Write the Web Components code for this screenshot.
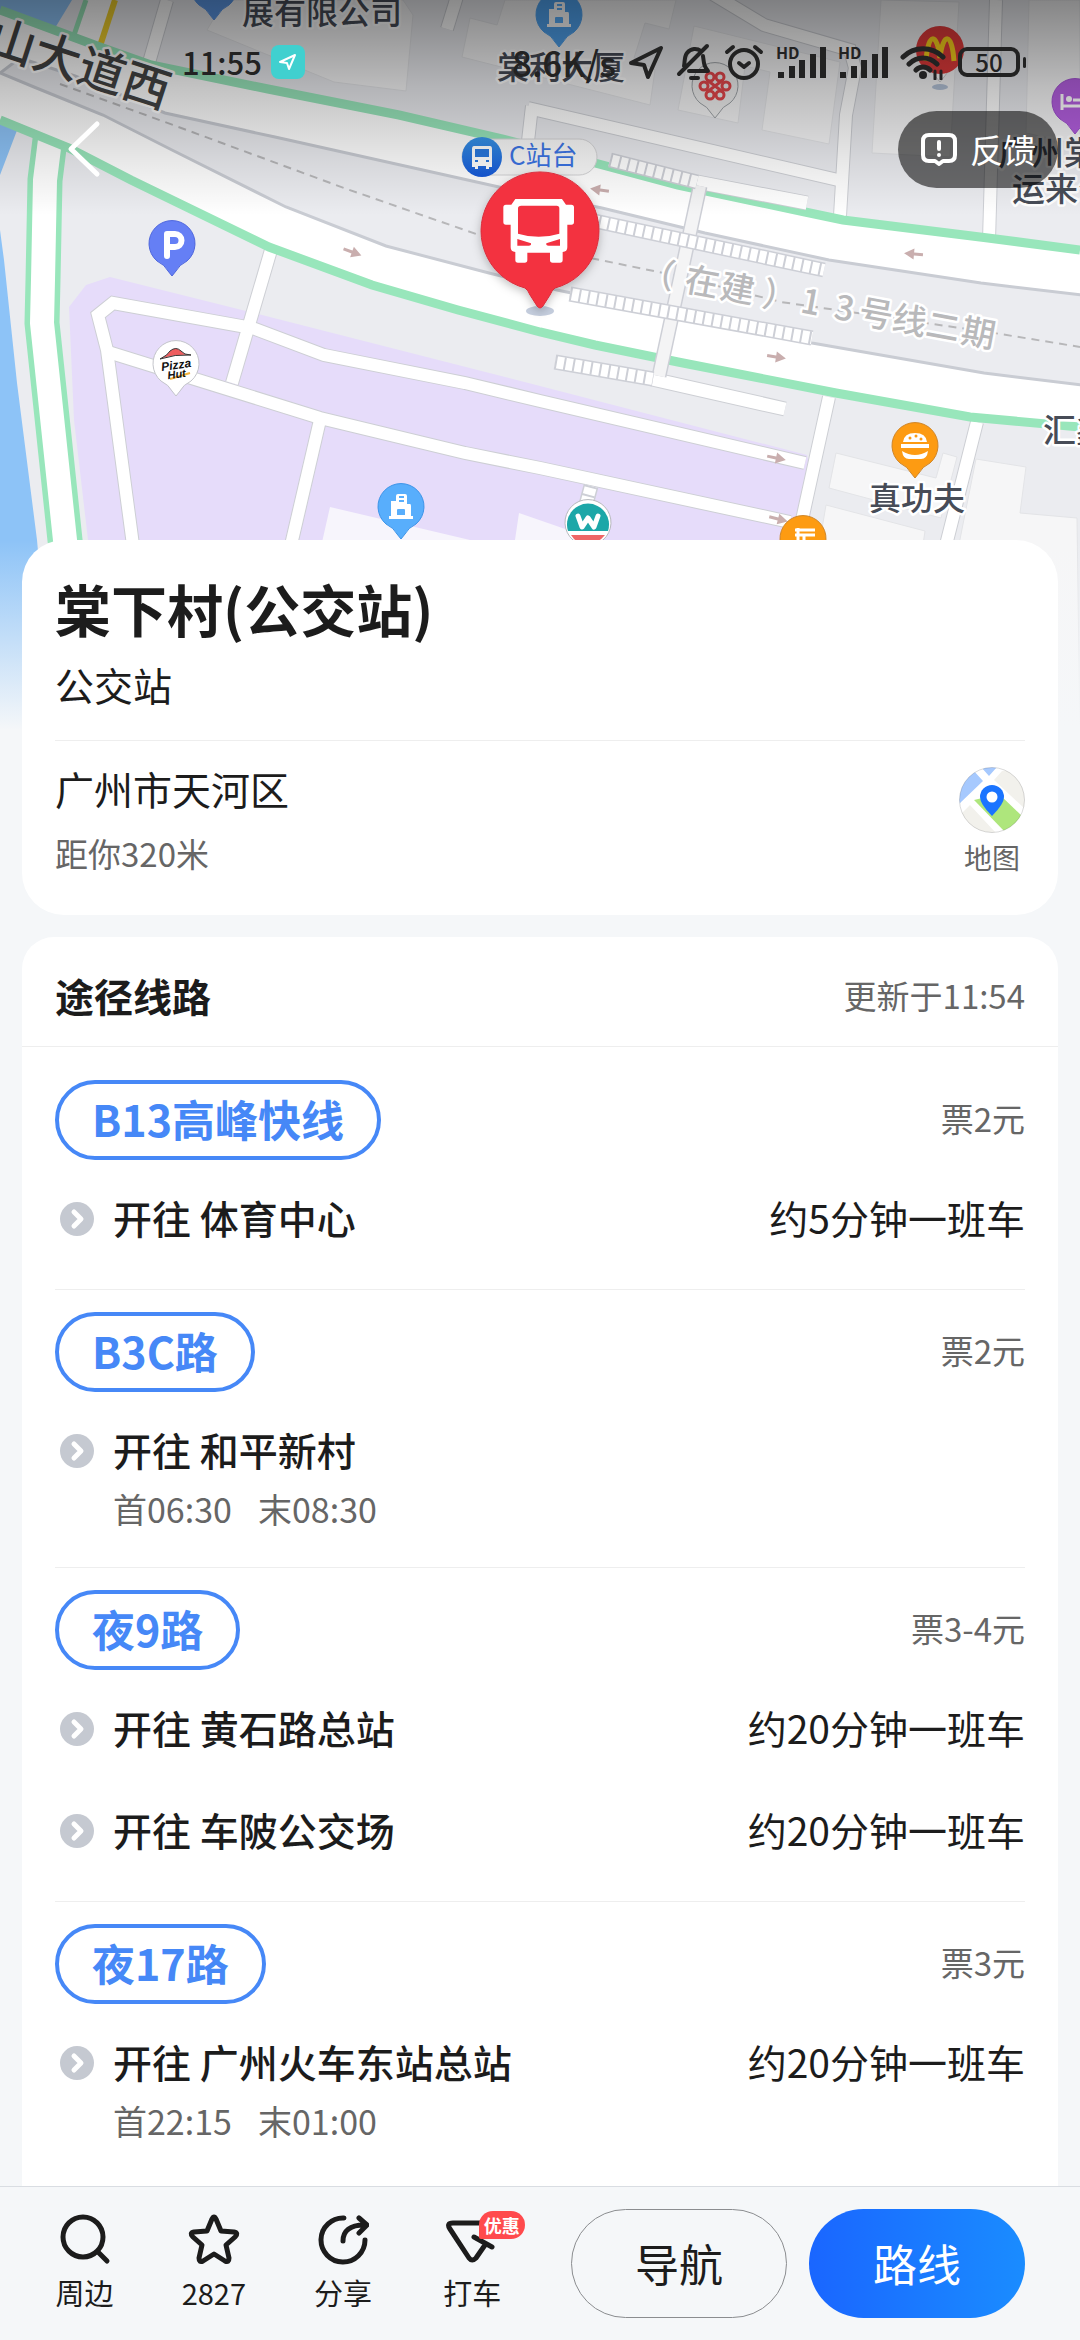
<!DOCTYPE html>
<html lang="zh-CN">
<head>
<meta charset="utf-8">
<meta name="viewport" content="width=device-width, initial-scale=1">
<title>棠下村(公交站)</title>
<style>
  :root {
    --page-bg: #f5f7f9;
    --text-primary: #1c1c1c;
    --text-muted: #666;
    --line: #eee;
    --accent: #4688f7;
  }
  body {
    margin: 0;
    background: var(--page-bg);
    color: var(--text-primary);
    font-family: "Noto Sans CJK SC", "Noto Sans", sans-serif;
  }
</style>
</head>
<body>
<station-page>
  <status-bar slot="overlay"></status-bar>
  <map-header slot="overlay"></map-header>
  <transit-map slot="map"></transit-map>
  <place-card heading="棠下村(公交站)" kind="公交站">
    <span slot="address">广州市天河区</span>
    <span slot="distance">距你320米</span>
  </place-card>
  <route-card heading="途径线路" updated="更新于11:54">
    <route-item name="B13高峰快线" price="票2元">
      <route-direction to="体育中心" every="约5分钟一班车"></route-direction>
    </route-item>
    <route-item name="B3C路" price="票2元">
      <route-direction to="和平新村" first="06:30" last="08:30"></route-direction>
    </route-item>
    <route-item name="夜9路" price="票3-4元">
      <route-direction to="黄石路总站" every="约20分钟一班车"></route-direction>
      <route-direction to="车陂公交场" every="约20分钟一班车"></route-direction>
    </route-item>
    <route-item name="夜17路" price="票3元">
      <route-direction to="广州火车东站总站" every="约20分钟一班车" first="22:15" last="01:00"></route-direction>
    </route-item>
  </route-card>
  <action-bar slot="footer">
    <action-tab icon="search">周边</action-tab>
    <action-tab icon="star">2827</action-tab>
    <action-tab icon="share">分享</action-tab>
    <action-tab icon="taxi" badge="优惠">打车</action-tab>
  </action-bar>
</station-page>

<script>
class BaseElement extends HTMLElement {
  constructor() {
    super();
    this.attachShadow({ mode: 'open' });
  }

  connectedCallback() {
    this.shadowRoot.innerHTML = `<style>${this.styles()}</style>${this.render()}`;
  }

  attr(name) {
    return this.getAttribute(name) || '';
  }
}

// page shell: scrolling content above a fixed action bar
class StationPage extends BaseElement {
  styles() {
    return `
      :host { display: flex; flex-direction: column; height: 100vh; }
      main { flex: 1; min-height: 0; position: relative; overflow-y: auto; scrollbar-width: none; }
      .overlay { position: absolute; top: 0; left: 0; right: 0; z-index: 2; }
      .cards { position: relative; display: flex; flex-direction: column; gap: 22px; padding: 0 22px; }
    `;
  }

  render() {
    return `
      <main>
        <div class="overlay"><slot name="overlay"></slot></div>
        <slot name="map"></slot>
        <div class="cards"><slot></slot></div>
      </main>
      <slot name="footer"></slot>
    `;
  }
}

class StatusBar extends BaseElement {
  styles() {
    return `
      :host { display: flex; align-items: center; height: 42px; padding: 41px 54px 0 182px; color: #222; font-size: 31px; font-weight: 500; line-height: 42px; }
      .badge { margin-left: 9px; }
      .right { display: flex; align-items: center; gap: 12px; margin-left: auto; }
      .speed { font-size: 35px; }
      svg { display: block; fill: none; stroke: currentColor; stroke-width: 5; stroke-linecap: round; stroke-linejoin: round; }
      .signal { position: relative; display: block; width: 50px; height: 36px; }
      .signal b { position: absolute; top: 0; left: 0; font-size: 16px; line-height: 16px; }
      .signal svg { stroke-linecap: butt; }
      .battery { display: flex; align-items: center; gap: 3px; }
      .battery span { box-sizing: border-box; width: 62px; height: 30px; border: 4px solid; border-radius: 9px; text-align: center; font-size: 24px; line-height: 21px; }
      .battery i { width: 3px; height: 11px; border-radius: 2px; background: currentColor; }
    `;
  }

  signal() {
    return `
      <span class="signal"><b>HD</b>
        <svg width="50" height="36" style="stroke-width:6"><path d="M5 34v-6M16 34V22M26 34V16M37 34V10M47 34V3"/></svg>
      </span>`;
  }

  render() {
    return `
      <span>11:55</span>
      <svg class="badge" width="34" height="34"><rect width="34" height="34" rx="8" fill="#40d0cf" stroke="none"/><path d="M9 17 24 10 18 24 16 18Z" stroke="#fff" stroke-width="2"/></svg>
      <div class="right">
        <span class="speed">8.6K/s</span>
        <svg width="36" height="36" style="stroke-width:4"><path d="M3 19 33 4 20 33 16 21Z"/></svg>
        <svg width="36" height="38" style="stroke-width:4"><path d="M3 31 31 3M8 23c1-4 0-9 3-13 4-5 10-5 14-2M27 13c1 8 1 10 5 15H13M15 35h7"/></svg>
        <svg width="40" height="38" style="stroke-width:4"><circle cx="20" cy="21" r="14"/><path d="M3 9 9 4M37 9l-6-5M15 20l5 4 5-4"/></svg>
        ${this.signal()}
        ${this.signal()}
        <svg width="46" height="36"><path d="M3 13c11-11 29-11 40 0M9 20c8-8 20-8 28 0M16 26c4-4 10-4 14 0"/><path d="M23 31v0" stroke-width="8"/><path d="M35 27v8M41 27v8" stroke-width="3"/></svg>
        <div class="battery"><span>50</span><i></i></div>
      </div>
    `;
  }
}

class MapHeader extends BaseElement {
  styles() {
    return `
      :host { display: flex; align-items: center; justify-content: space-between; height: 132px; padding: 0 22px 0 54px; }
      button { display: flex; align-items: center; border: 0; padding: 0; background: none; color: #fff; font: inherit; }
      svg { display: block; fill: none; stroke: #fff; stroke-linecap: round; stroke-linejoin: round; }
      .back { width: 60px; height: 76px; justify-content: center; }
      .feedback { height: 77px; padding: 0 22px; gap: 12px; border-radius: 39px; background: rgba(0, 0, 0, .55); font-size: 33px; line-height: 48px; }
    `;
  }

  render() {
    return `
      <button class="back" aria-label="返回"><svg width="34" height="60" stroke-width="5"><path d="M30 5 4 30l26 25"/></svg></button>
      <button class="feedback">
        <svg width="38" height="34" stroke-width="4"><path d="M9 3h20q6 0 6 6v14q0 6-6 6h-6l-4 3-4-3H9q-6 0-6-6V9q0-6 6-6Z"/><path d="M19 10v7M19 23v0"/></svg>
        反馈
      </button>
    `;
  }
}

// tail + disc shared by every small map marker
const pin = (x, y, fill, glyph = '', edge = fill) => `
  <g transform="translate(${x} ${y})">
    <path d="M-15 17A23 23 0 1 1 15 17Q7 21 4 27L0 32-4 27Q-7 21-15 17Z" fill="${fill}" stroke="${edge}" stroke-width="1"/>
    ${glyph}
  </g>`;

const road = (d, w = 12) => `<path d="${d}" stroke="#cdcfd4" stroke-width="${w + 2}"/>`;
const roadFill = (d, w = 12) => `<path d="${d}" stroke="#fff" stroke-width="${w}"/>`;
const ladder = (d) => `
  <path d="${d}" stroke="#cdcfd6" stroke-width="15"/>
  <path d="${d}" stroke="#fff" stroke-width="12"/>
  <path d="${d}" stroke="#cdcfd6" stroke-width="13" stroke-dasharray="2 7"/>`;
const arrow = (x, y, deg) => `<path transform="translate(${x} ${y}) rotate(${deg})" d="M-9-1.5H0V-5.500L10 0 0 5.500V1.500H-9Z" fill="#c9aeae"/>`;

class TransitMap extends BaseElement {
  styles() {
    return `
      :host { display: block; position: relative; height: 540px; }
      svg { position: absolute; top: 0; left: 0; width: 100%; height: 740px; }
      text { font-weight: 500; fill: #474c57; stroke: #fff; stroke-width: 5px; paint-order: stroke; stroke-linejoin: round; }
    `;
  }

  render() {
    const lanes = [
      'M167 0 148 66', 'M459-10 447 29', 'M532 106 527 150',
      'M706-10 764 25 850 50 855 68 846 115 840 216',
      'M528 108 838 180', 'M996 0 989 240'
    ];
    const blockRoads = [
      'M133 545 107 350 98 315 113 303 241 326 255 329 324 355 465 383 540 401 805 463',
      'M108 352 320 418 465 453 540 468 790 522',
      'M271 250 232 383', 'M320 420 291 545',
      'M829 397 802 520 792 560', 'M977 422 946 545 900 740'
    ];
    const building = `
      <path d="M-12 12V9H-10V-6H-5V-11Q-5-13-3-13H4Q6-13 6-11V-3H9Q10-3 10-1V9H12V12Z" fill="#fff"/>
      <path d="M-2-10H3M-2-6H3" stroke="#58aefc" stroke-width="2"/><path d="M-4 8V3Q-4 2-3 2H3Q4 2 4 3V8Z" fill="#58aefc"/>`;
    return `
      <svg viewBox="0 0 1080 740" preserveAspectRatio="xMidYMin slice" fill="none">
        <defs>
          <linearGradient id="shade" x1="0" y1="0" x2="0" y2="1">
            <stop offset="0" stop-color="#000" stop-opacity=".46"/>
            <stop offset=".4" stop-color="#000" stop-opacity=".24"/>
            <stop offset=".75" stop-color="#000" stop-opacity=".09"/>
            <stop offset="1" stop-color="#000" stop-opacity="0"/>
          </linearGradient>
          <linearGradient id="fade" x1="0" y1="0" x2="0" y2="1">
            <stop offset="0" stop-color="#f5f7f9" stop-opacity="0"/>
            <stop offset="1" stop-color="#f5f7f9"/>
          </linearGradient>
          <linearGradient id="metro" x1="0" y1="0" x2="0" y2="1"><stop stop-color="#3794e8"/><stop offset="1" stop-color="#1658d8"/></linearGradient>
          <filter id="shadow" x="-30%" y="-30%" width="160%" height="160%"><feDropShadow dx="0" dy="3" stdDeviation="5" flood-opacity=".25"/></filter>
        </defs>

        <rect width="1080" height="740" fill="#ebecf0"/>
        <path d="M0 0H72L55 28 35 85 16 133 0 175ZM0 230 4 260 17 383 37 540 55 740H0Z" fill="#8dc3f7"/>

        <!-- buildings -->
        <g fill="#f6f6f7" stroke="#e3e4e7">
          <path d="M225 0 207 30 334 82 406 91 413 15 403 0Z"/>
          <path d="M470 18 497 25 505 0H676L669 29 645 23 634 58 655 70 650 105 462 57Z"/>
          <path d="M694 26 840 62 829 144 762 130 770 72 745 66 738 123 678 110Z"/>
          <path d="M881 0 959 2 950 157 872 153Z"/>
          <path d="M1029 0H1080V145L1026 133Z"/>
          <path d="M836 453 936 478 943 453 957 457 941 518 829 488Z"/>
          <path d="M826 505 925 531 915 600H810Z"/>
          <path d="M976 459 1026 467 1020 513 1077 518 1080 740H920Z"/>
        </g>

        <path d="M110 277 86 285 69 307 74 420 88 540 100 640H790L815 487 807 455 540 386 262 315Z" fill="#e6dcfa"/>
        <path d="M330 507 470 540 500 560H318ZM519 513 620 548 600 560H512Z" fill="#f7f5fc"/>

        <!-- side roads -->
        ${lanes.map(d => road(d)).join('')}${lanes.map(d => roadFill(d)).join('')}
        ${blockRoads.map(d => road(d)).join('')}${blockRoads.map(d => roadFill(d)).join('')}
        <path d="M86 0 74 40 99 50 115 0Z" fill="#fff"/>
        <path d="M86 0 73 38" stroke="#98e6b8" stroke-width="5"/>
        <path d="M115 0 100 46" stroke="#f0cf2c" stroke-width="6"/>
        <path d="M50 140 45 180 43 280 42 323 65 540 88 740" stroke="#98e6bb" stroke-width="35"/>
        <path d="M50 140 45 180 43 280 42 323 65 540 88 740" stroke="#fff" stroke-width="24"/>

        <!-- avenue -->
        <path d="M0 10 100 47 151 65 268 89 399 115 503 139 595 163 678 185 805 212 843 220 988 238 1080 250V427L970 417 836 393 678 362 595 345 540 332 458 310 372 285 269 247 131 180 69 148 0 120Z" fill="#fff"/>
        <path d="M0 73 34 87 103 115 172 150 286 207 386 246 489 273 557 290 812 343 984 373 1090 386V296L981 283 829 260 705 233 602 208 499 187 275 137 165 113 75 76 20 58Z" fill="#ebecf0" stroke="#c9ccd3" stroke-width="3"/>
        <path d="M0 10 100 47 151 65 268 89 399 115 503 139 595 163 678 185 805 212 843 220 988 238 1080 250M0 120 69 148 131 180 269 247 372 285 458 310 540 332 595 345 678 362 836 393 970 417 1080 427" stroke="#98e6bb" stroke-width="9"/>
        <path d="M60 84 165 122 344 188 479 235 600 260 678 276 781 302 988 332 1080 347" stroke="#b7b7b9" stroke-width="2" stroke-dasharray="8 6"/>

        <!-- bus rapid transit platforms -->
        ${road('M697 182 807 203', 13)}${roadFill('M697 182 807 203', 13)}
        ${road('M652 379 785 409', 13)}${roadFill('M652 379 785 409', 13)}
        <path d="M700 186 659 376" stroke="#cdcfd6" stroke-width="15"/>
        <path d="M700 186 659 376" stroke="#f4f4f5" stroke-width="12"/>
        ${ladder('M610 160 697 182')}
        ${ladder('M590 220 824 270')}
        ${ladder('M570 294 812 338')}
        ${ladder('M555 362 653 379')}
        ${ladder('M591 486 584 512')}
        ${arrow(352, 252, 20)}${arrow(600, 190, 188)}${arrow(914, 254, 185)}
        ${arrow(776, 357, 9)}${arrow(776, 458, 12)}${arrow(778, 519, 14)}

        <!-- place names -->
        <text x="242" y="24" font-size="32">展有限公司</text>
        <text x="497" y="79" font-size="32">棠利大厦</text>
        <text x="998" y="165" font-size="33">广州棠</text>
        <text x="1012" y="201" font-size="33">运来公</text>
        <text x="869" y="510" font-size="32">真功夫</text>
        <text x="1043" y="442" font-size="33">汇鑫</text>
        <text transform="translate(-15 51) rotate(18)" font-size="47" style="fill:#444">山大道西</text>
        <text transform="translate(641 283) rotate(10.500)" x="-2 43 79 122 161 195 220 254 288 324" font-size="34" style="fill:#b9b9bb">（在建）13号线二期</text>

        <!-- markers -->
        ${pin(214, -12, '#5b97e6')}
        ${pin(559, 15, '#4fa3f0', building)}
        ${pin(401, 507, '#58aefc', building, '#3d94e8')}
        ${pin(172, 244, '#657ff5', '<path d="M-5 12V-10H3a6 6 0 0 1 0 13H-5" stroke="#fff" stroke-width="6" stroke-linecap="round" stroke-linejoin="round"/>', '#4f67dd')}
        ${pin(715, 86, '#f1f1f1', '<g stroke="#e5474b" stroke-width="3"><circle cx="-5" cy="-9" r="4"/><circle cx="5" cy="-9" r="4"/><circle cx="-11" cy="0" r="4"/><circle cx="11" cy="0" r="4"/><circle cx="-5" cy="9" r="4"/><circle cx="5" cy="9" r="4"/><path d="M-8-6 8 6M8-6-8 6"/></g>', '#9fa4a8')}
        <ellipse cx="940" cy="87" rx="8" ry="3" fill="#b4c3d8"/>
        ${pin(940, 50, '#fff', '<circle r="24" fill="#e23b3b"/><path d="M-14 11C-12-18-3-18 0 8 3-18 12-18 14 11" stroke="#fbd21c" stroke-width="5"/>', '#ccc')}
        ${pin(1075, 102, '#b45fe0', '<path d="M-13-8V8M-13 4H13V-2H-2" stroke="#fff" stroke-width="3"/><circle cx="-6" cy="-3" r="3" fill="#fff"/>', '#a04fd0')}
        ${pin(915, 446, '#fd9b12', '<path d="M-12-4Q-11-13 0-13T12-4ZM-14-2H14V2H-14ZM-13 5Q0 13 13 5 12 13 6 13H-6Q-12 13-13 5Z" fill="#fff"/><path d="M-5-8v0M1-10v0M6-7v0" stroke="#fd9b12" stroke-width="3" stroke-linecap="round"/>', '#cf8528')}
        ${pin(803, 539, '#fd9b12', '<path d="M-8-9H12M-8-4H12M-5-11V4M1-4V4" stroke="#fff" stroke-width="3"/>', '#cf8528')}
        ${pin(588, 523, '#fff', '<path d="M-20 8A21 21 0 1 1 20 8Z" fill="#1ca7a8"/><path d="M-17 12H17Q11 20 0 21T-17 12Z" fill="#ee6666"/><path d="M-10-7-6 4 0-5 6 4 10-7" stroke="#fff" stroke-width="5" stroke-linecap="round" stroke-linejoin="round"/>', '#b7b9bd')}
        ${pin(176, 364, '#fff', '<path d="M-16-5Q-8-9-6-13 0-18 5-13 8-9 15-9-1-10-16-5Z" fill="#ee5d5f" stroke="#333" stroke-width="1"/><path d="M-6 15 14 9" stroke="#f5b23c" stroke-width="2"/><g font-family="Liberation Sans" font-weight="700" font-style="italic" transform="rotate(-8)"><text x="-15" y="5" font-size="12" style="fill:#111;stroke:none;font-weight:700">Pizza</text><text x="-10" y="14" font-size="11" style="fill:#111;stroke:none;font-weight:700">Hut</text></g>', '#c4c5cb')}

        <rect x="462" y="139" width="135" height="36" rx="18" fill="#f8f8f8" stroke="#d4d4d6"/>
        <circle cx="482" cy="157" r="20" fill="url(#metro)"/>
        <path d="M474 146H490Q492 146 492 149V167H489V169H486V166H478V169H475V167H472V149Q472 146 474 146Z" fill="#fff"/>
        <path d="M475 149H489V157H475ZM475 160h3v2h-3ZM486 160h3v2h-3Z" fill="#2a78de"/>
        <text x="509" y="165" font-size="26" style="fill:#3c74e4;stroke:none;font-weight:400">C站台</text>

        <rect width="1080" height="215" fill="url(#shade)"/>
        <rect y="540" width="1080" height="190" fill="url(#fade)"/>
        <rect y="729" width="1080" height="11" fill="#f5f7f9"/>

        <!-- selected stop -->
        <ellipse cx="540" cy="311" rx="14" ry="5" fill="#c4cddd"/>
        <path filter="url(#shadow)" d="M525 288A59 59 0 1 1 555 288Q552 290 550 295L543 306Q540 310 537 306L530 295Q528 290 525 288Z" fill="#f33141" stroke="#d92e3c" stroke-width="1"/>
        <g transform="translate(470 160) scale(.3333)">
          <path d="M136 117H276L288 134H304Q312 134 312 142V186Q312 194 304 194H292V262Q292 276 278 276V300Q278 308 270 308H248Q240 308 240 300V278H172V300Q172 308 164 308H144Q136 308 136 300V276Q122 276 122 262V194H108Q100 194 100 186V142Q100 134 108 134H124Z" fill="#fff"/>
          <path d="M154 137H260Q268 137 268 145V221Q206 240 144 221V145Q144 137 154 137ZM142 237 183 250Q185 257 176 257H142ZM270 237 229 250Q227 257 236 257H270Z" fill="#f33141"/>
        </g>
      </svg>
    `;
  }
}

class PlaceCard extends BaseElement {
  styles() {
    return `
      :host { display: block; padding: 35px 33px 38px; border-radius: 42px; background: #fff; }
      h1, p { margin: 0; }
      h1 { font-size: 56px; line-height: 66px; font-weight: 700; }
      .kind { margin-top: 15px; padding-bottom: 28px; border-bottom: 1px solid var(--line); font-size: 39px; line-height: 56px; }
      .place { display: flex; justify-content: space-between; align-items: flex-start; padding-top: 19px; }
      .address { font-size: 39px; line-height: 56px; }
      .distance { margin-top: 13px; color: var(--text-muted); font-size: 33px; line-height: 48px; }
      button { display: flex; flex-direction: column; align-items: center; gap: 4px; margin-top: 7px; border: 0; padding: 0; background: none; color: var(--text-muted); font: inherit; font-size: 28px; line-height: 40px; }
      svg { display: block; }
    `;
  }

  render() {
    return `
      <h1>${this.attr('heading')}</h1>
      <p class="kind">${this.attr('kind')}</p>
      <div class="place">
        <div>
          <p class="address"><slot name="address"></slot></p>
          <p class="distance"><slot name="distance"></slot></p>
        </div>
        <button>
          <svg width="66" height="66">
            <defs><clipPath id="disc"><circle cx="33" cy="33" r="32.500"/></clipPath></defs>
            <g clip-path="url(#disc)">
              <rect width="66" height="66" fill="#fff"/>
              <path d="M0 37 24 14 14 3 0 0ZM22 0 30 9 38 0Z" fill="#a6c9fe"/>
              <path d="M43 4 35 13 66 42V0ZM0 49 11 38 37 66H0Z" fill="#f2f1ec"/>
              <path d="M15 33 47 66 64 50 40 27Z" fill="#aee67c"/>
            </g>
            <circle cx="33" cy="33" r="32.500" fill="none" stroke="#000" stroke-opacity=".15"/>
            <path d="M33 49Q21 37 21 30A12 12 0 0 1 45 30Q45 37 33 49Z" fill="#1a74ff"/>
            <circle cx="33" cy="30" r="5.500" fill="#fff"/>
          </svg>
          地图
        </button>
      </div>
    `;
  }
}

class RouteCard extends BaseElement {
  styles() {
    return `
      :host { display: block; padding-bottom: 40px; border-radius: 32px; background: #fff; }
      header { display: flex; align-items: center; justify-content: space-between; padding: 30px 33px 23px; border-bottom: 1px solid var(--line); line-height: 56px; }
      h2 { margin: 0; font-size: 39px; font-weight: 700; }
      span { color: var(--text-muted); font-size: 33px; }
      .list { padding: 11px 33px 0; }
      ::slotted(route-item:not(:last-child)) { border-bottom: 1px solid var(--line); }
    `;
  }

  render() {
    return `
      <header><h2>${this.attr('heading')}</h2><span>${this.attr('updated')}</span></header>
      <div class="list"><slot></slot></div>
    `;
  }
}

class RouteItem extends BaseElement {
  styles() {
    return `
      :host { display: block; padding-top: 22px; }
      .head { display: flex; align-items: center; justify-content: space-between; margin-bottom: 27px; }
      a { box-sizing: border-box; height: 80px; padding: 0 33px; border: 4px solid var(--accent); border-radius: 40px; color: var(--accent); font-size: 43px; font-weight: 700; line-height: 68px; text-decoration: none; }
      .price { margin-bottom: 4px; color: var(--text-muted); font-size: 33px; line-height: 48px; }
    `;
  }

  render() {
    return `
      <div class="head"><a href="#">${this.attr('name')}</a><span class="price">${this.attr('price')}</span></div>
      <slot></slot>
    `;
  }
}

class RouteDirection extends BaseElement {
  styles() {
    return `
      :host { display: block; padding: 7px 0 45px; }
      :host([first]) { padding-bottom: 36px; }
      .row { display: flex; align-items: center; font-size: 39px; line-height: 46px; }
      svg { display: block; margin: 0 19px 0 5px; }
      b, .every { margin-bottom: 4px; }
      b { font-weight: 500; }
      .every { margin-left: auto; }
      .times { display: flex; gap: 26px; margin-top: 11px; padding-left: 58px; color: var(--text-muted); font-size: 34px; line-height: 44px; }
    `;
  }

  render() {
    const times = this.hasAttribute('first')
      ? `<div class="times"><span>首${this.attr('first')}</span><span>末${this.attr('last')}</span></div>`
      : '';
    return `
      <div class="row">
        <svg width="34" height="34"><circle cx="17" cy="17" r="17" fill="#c5c9d1"/><path d="M14 10 21 17 14 24" fill="none" stroke="#fff" stroke-width="5" stroke-linecap="round" stroke-linejoin="round"/></svg>
        <b>开往 ${this.attr('to')}</b>
        <span class="every">${this.attr('every')}</span>
      </div>
      ${times}
    `;
  }
}

class ActionBar extends BaseElement {
  styles() {
    return `
      :host { display: flex; align-items: flex-start; gap: 22px; padding: 22px 55px 22px 20px; border-top: 1px solid #d9dde2; background: var(--page-bg); }
      .tabs { display: flex; flex: 1; margin-right: 12px; }
      button { box-sizing: border-box; width: 216px; height: 109px; border: 1px solid #8b8d90; border-radius: 55px; padding: 0 0 2px; background: none; color: var(--text-primary); font: inherit; font-size: 44px; }
      .primary { border: 0; background: linear-gradient(90deg, #1a66ff, #1a8cff); color: #fff; }
    `;
  }

  render() {
    return `
      <div class="tabs"><slot></slot></div>
      <button>导航</button>
      <button class="primary">路线</button>
    `;
  }
}

const ICONS = {
  search: '<circle cx="24" cy="25" r="20"/><path d="M39 40 48 49"/>',
  star: '<path d="M24 7Q26 3 28 7L33 19 46 20Q51 21 47 25L38 33 41 46Q41 51 37 49L26 42 15 49Q11 51 11 46L14 33 5 25Q1 21 6 20L19 19Z"/>',
  share: '<path d="M27 6A22 22 0 1 0 48 28M26 29C26 19 33 13 47 13M42 6 50 13 42 21"/>',
  taxi: '<path d="M46 11H7Q0 11 4 17L23 46Q26 50 30 46L39 33M28 25 46 35"/>'
};

class ActionTab extends BaseElement {
  styles() {
    return `
      :host { display: block; flex: 1; }
      button { position: relative; display: flex; flex-direction: column; align-items: center; width: 100%; border: 0; padding: 3px 0 0; background: none; color: var(--text-primary); font: inherit; font-size: 29px; line-height: 42px; }
      svg { display: block; margin-bottom: 5px; fill: none; stroke: currentColor; stroke-width: 5; stroke-linecap: round; stroke-linejoin: round; }
      .badge { position: absolute; top: 2px; left: 71px; padding: 0 5px; border-radius: 14px 14px 14px 2px; background: #ff4a4d; color: #fff; font-size: 18px; font-weight: 700; line-height: 28px; }
    `;
  }

  render() {
    const badge = this.attr('badge');
    return `
      <button>
        <svg width="52" height="54">${ICONS[this.attr('icon')]}</svg>
        ${badge ? `<span class="badge">${badge}</span>` : ''}
        <span><slot></slot></span>
      </button>
    `;
  }
}

customElements.define('station-page', StationPage);
customElements.define('status-bar', StatusBar);
customElements.define('map-header', MapHeader);
customElements.define('transit-map', TransitMap);
customElements.define('place-card', PlaceCard);
customElements.define('route-card', RouteCard);
customElements.define('route-item', RouteItem);
customElements.define('route-direction', RouteDirection);
customElements.define('action-bar', ActionBar);
customElements.define('action-tab', ActionTab);
</script>
</body>
</html>
